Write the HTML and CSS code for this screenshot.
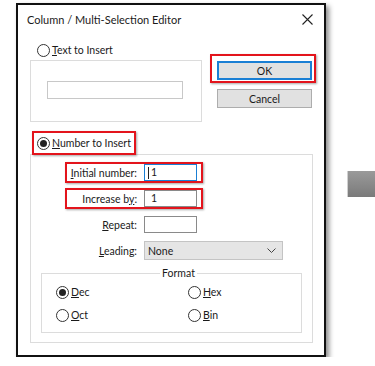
FILE: index.html
```html
<!DOCTYPE html>
<html lang="en">
<head>
  <meta charset="UTF-8">
  <title>Column / Multi-Selection Editor</title>
  <link rel="stylesheet" href="styles.css">
</head>
<body>

<div class="dialog">
  <div class="titlebar">
    <span class="title">Column / Multi-Selection Editor</span>
    <svg class="close" width="11" height="11" viewBox="0 0 11 11">
      <path d="M0.5 0.5 L10.5 10.5 M10.5 0.5 L0.5 10.5" stroke="#222" stroke-width="1.1" fill="none"/>
    </svg>
  </div>

  <div class="top">
    <div class="left-col">
      <div class="radio-row">
        <span class="radio"></span>
        <span><u>T</u>ext to Insert</span>
      </div>
      <div class="box text-box">
        <div class="textfield"></div>
      </div>
    </div>
    <div class="buttons">
      <div class="hl ok-hl">
        <button class="btn btn-default">OK</button>
      </div>
      <button class="btn">Cancel</button>
    </div>
  </div>

  <div class="hl number-hl">
    <div class="radio-row">
      <span class="radio checked"></span>
      <span><u>N</u>umber to Insert</span>
    </div>
  </div>

  <div class="box number-box">
    <div class="field marked">
      <span class="lbl"><u>I</u>nitial number:</span>
      <div class="input focus"><span class="caret"></span>1</div>
    </div>
    <div class="field marked">
      <span class="lbl">Increase b<u>y</u>:</span>
      <div class="input">1</div>
    </div>
    <div class="field">
      <span class="lbl"><u>R</u>epeat:</span>
      <div class="input"></div>
    </div>
    <div class="field">
      <span class="lbl"><u>L</u>eading:</span>
      <div class="combo">
        <span>None</span>
        <svg width="9" height="6" viewBox="0 0 9 6">
          <polyline points="0.5,0.5 4.5,4.5 8.5,0.5" fill="none" stroke="#444" stroke-width="1"/>
        </svg>
      </div>
    </div>

    <fieldset class="format">
      <legend>Format</legend>
      <div class="radio-row">
        <span class="radio checked"></span>
        <span><u>D</u>ec</span>
      </div>
      <div class="radio-row">
        <span class="radio"></span>
        <span><u>H</u>ex</span>
      </div>
      <div class="radio-row">
        <span class="radio"></span>
        <span><u>O</u>ct</span>
      </div>
      <div class="radio-row">
        <span class="radio"></span>
        <span><u>B</u>in</span>
      </div>
    </fieldset>
  </div>
</div>

<div class="grey-tile"></div>

</body>
</html>
```

FILE: styles.css
```css
body {
  margin: 0;
  padding: 3px 0 0 16px;
  display: flex;
  align-items: flex-start;
  overflow: hidden;
  background: white;
  color: #1a1a1a;
  font-family: Lato, "Liberation Sans", sans-serif;
  font-size: 10.5px;
}

.dialog {
  box-sizing: border-box;
  width: 310px;
  height: 354px;
  border: 2px solid #111;
  background: white;
  box-shadow: 3px 3px 5px rgba(0, 0, 0, 0.45);
  flex-shrink: 0;
}

.titlebar {
  height: 28px;
  display: flex;
  align-items: center;
  justify-content: space-between;
  padding: 0 11px 0 9px;
  font-size: 11px;
}

.close {
  display: block;
}

.top {
  display: flex;
  padding-left: 12px;
  margin-top: 10px;
}

.radio-row {
  display: flex;
  align-items: center;
  height: 14px;
  gap: 2px;
  white-space: nowrap;
}

.left-col .radio-row {
  padding-left: 7px;
}

.radio {
  box-sizing: border-box;
  width: 13px;
  height: 13px;
  border: 1px solid #333;
  border-radius: 50%;
  display: flex;
  align-items: center;
  justify-content: center;
  background: white;
}

.radio.checked::after {
  content: "";
  width: 7px;
  height: 7px;
  border-radius: 50%;
  background: #222;
}

.box {
  box-sizing: border-box;
  border: 1px solid #dcdcdc;
}

.text-box {
  width: 172px;
  height: 62px;
  margin-top: 3px;
  padding: 20px 0 0 16px;
}

.textfield {
  box-sizing: border-box;
  width: 136px;
  height: 18px;
  border: 1px solid #c8c8c8;
}

.buttons {
  display: flex;
  flex-direction: column;
  align-items: flex-start;
  margin: 11px 0 0 8px;
}

.hl,
.field.marked {
  border: 2px solid #e3141c;
  box-shadow: 1px 1px 2px rgba(0, 0, 0, 0.35);
}

.ok-hl {
  padding: 5px 2px 1px 5px;
}

.btn {
  box-sizing: border-box;
  width: 95px;
  height: 19px;
  border: 1px solid #adadad;
  background: #e1e1e1;
  font-family: inherit;
  font-size: 10.5px;
  color: #1a1a1a;
  padding: 0;
  margin: 0;
}

.btn-default {
  border: 2px solid #1a7fd4;
}

.buttons > .btn {
  margin: 6px 0 0 7px;
}

.number-hl {
  position: relative;
  z-index: 1;
  box-sizing: border-box;
  width: 104px;
  height: 24px;
  margin: 9px 0 0 14px;
  padding: 3px 0 0 3px;
  background: white;
}

.number-box {
  width: 283px;
  height: 189px;
  margin: -1px 0 0 12px;
  padding-top: 7px;
  display: flex;
  flex-direction: column;
  align-items: flex-start;
  gap: 5px;
}

.field {
  box-sizing: border-box;
  display: flex;
  align-items: center;
  margin-left: 34px;
  padding-right: 4px;
  border: 2px solid transparent;
  height: 21px;
}

.lbl {
  width: 70px;
  text-align: right;
  white-space: nowrap;
}

.input {
  box-sizing: border-box;
  width: 53px;
  height: 17px;
  margin-left: 7px;
  border: 1px solid #8a8a8a;
  padding-left: 6px;
  line-height: 15px;
  display: flex;
  align-items: center;
}

.input.focus {
  border-color: #1a7fd4;
  padding-left: 3px;
}

.caret {
  width: 1px;
  height: 12px;
  background: #222;
  margin-right: 2px;
}

.combo {
  box-sizing: border-box;
  width: 139px;
  height: 19px;
  margin-left: 7px;
  border: 1px solid #c4c4c4;
  background: #e5e5e5;
  display: flex;
  align-items: center;
  justify-content: space-between;
  padding: 0 6px 0 3px;
}

.combo svg {
  display: block;
}

.format {
  box-sizing: border-box;
  width: 261px;
  height: 66px;
  margin: 1px 0 0 10px;
  padding: 6px 0 0 14px;
  border: 1px solid #dcdcdc;
  display: grid;
  grid-template-columns: 132px 1fr;
  row-gap: 9px;
  align-content: start;
}

.format legend {
  margin: 0 auto;
  padding: 0 2px;
}

.grey-tile {
  width: 30px;
  height: 26px;
  margin: 168px 0 0 21px;
  flex-shrink: 0;
  background: linear-gradient(#9a9a9a, #7a7a7a);
  border-left: 1px solid #d0d0d0;
}
```
